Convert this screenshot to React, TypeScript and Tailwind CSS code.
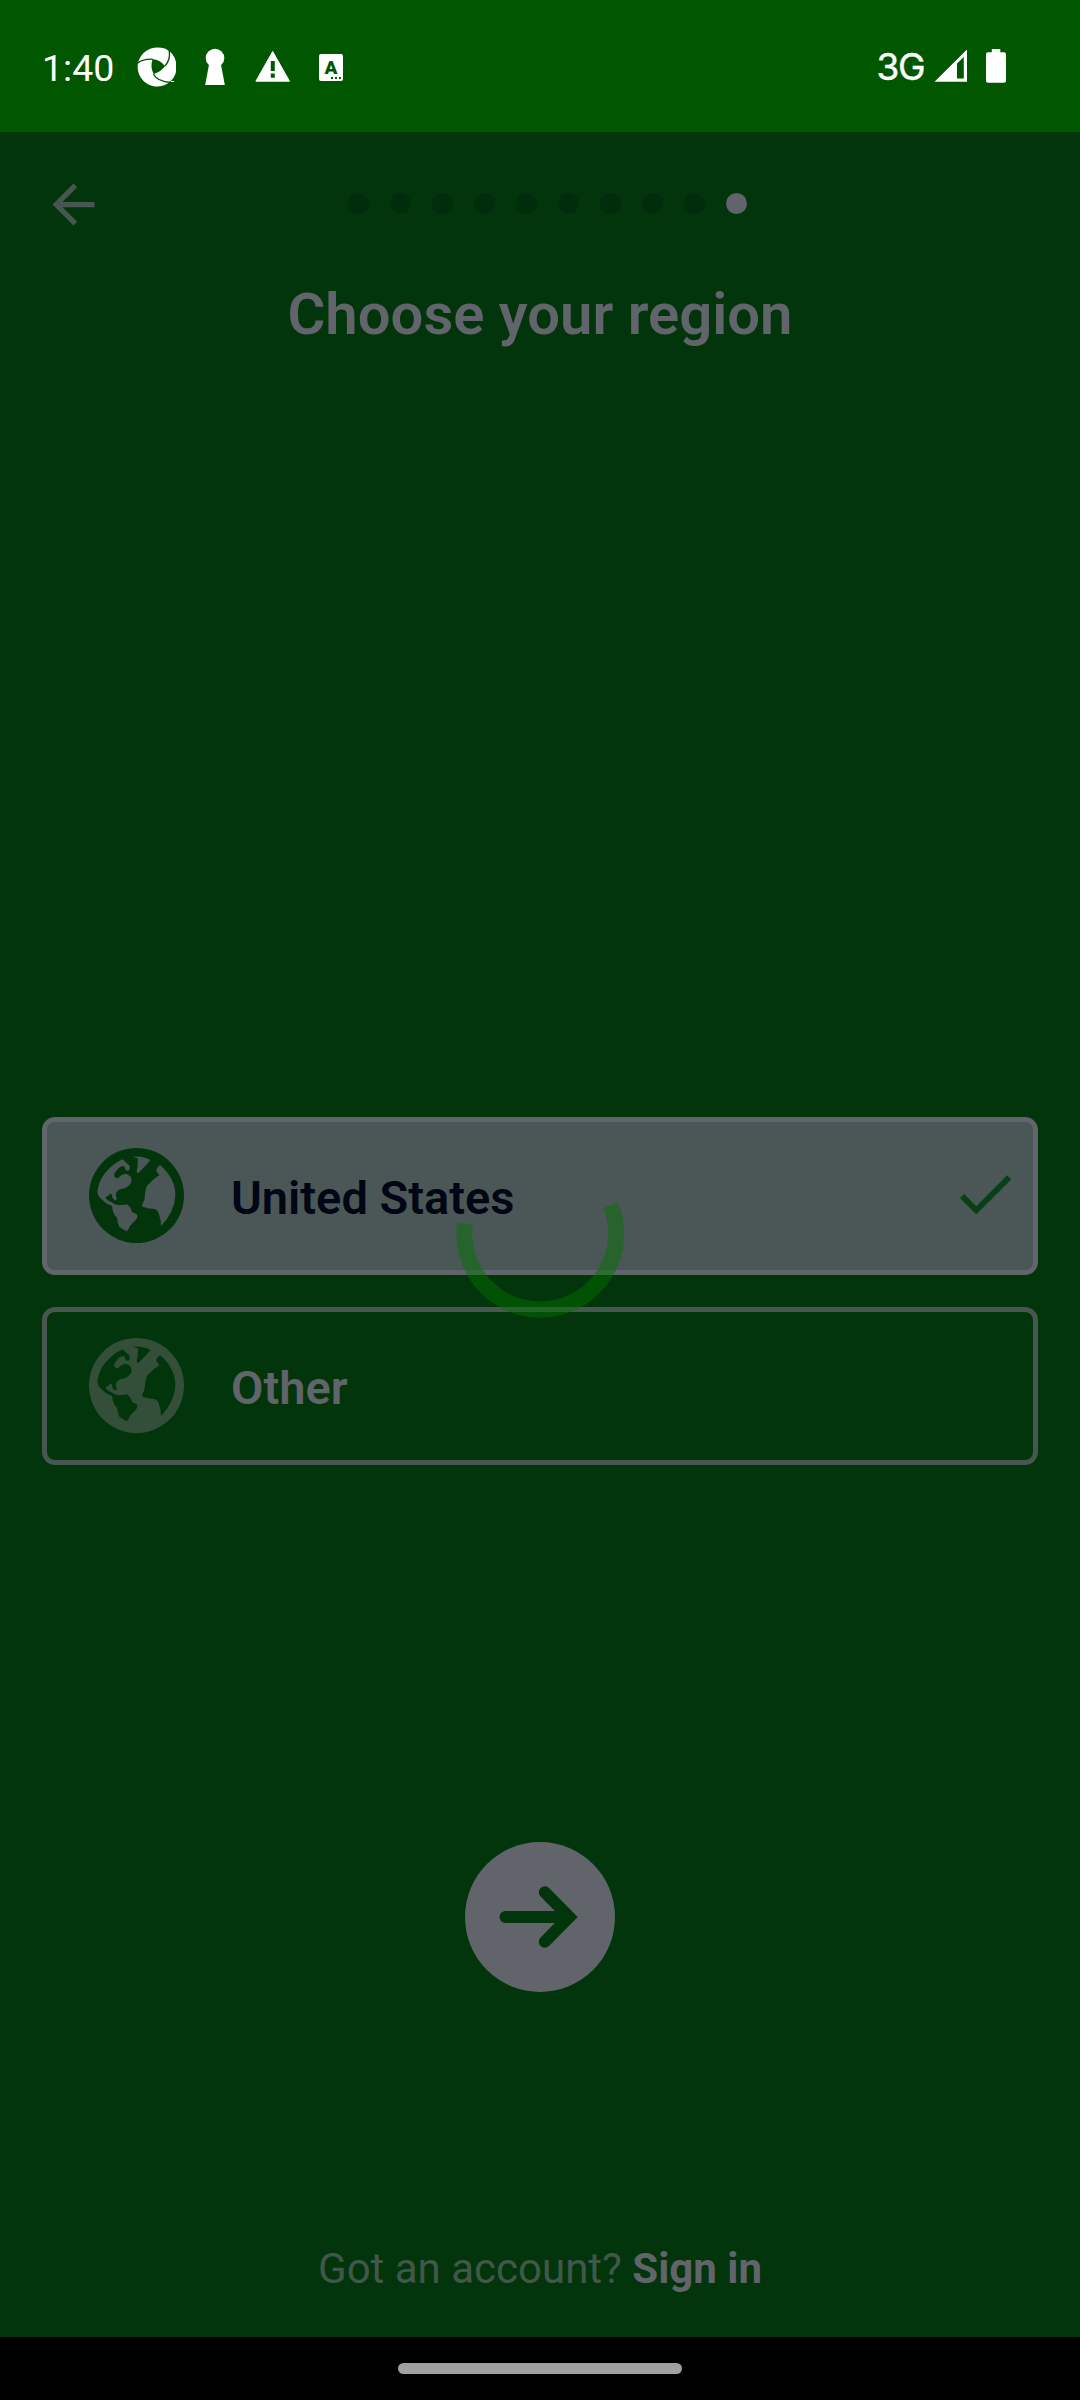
import React from "react";

function Globe({ id, className }: { id: string; className: string }) {
  return (
    <svg viewBox="0 0 285 285" className={`mb-px h-[95px] w-[95px] shrink-0 ${className}`}>
      <mask id={id}>
        <circle cx="142.5" cy="142.5" r="142.5" fill="white" />
        <g fill="black">
          <path d="M25 131Q27 145 35 151L51 166L69 174Q70 190 77 202Q84 206 85 214Q86 228 91 236Q102 244 111 249Q117 248 119 243Q121 234 133 223Q148 210 145 202Q143 197 130 193Q127 180 115 169Q104 172 88 171Q76 169 70 164L55 156Q49 152 50 148Q53 144 59 143Q62 135 67 138Q71 140 69 146L76 156Q84 158 84 151Q78 146 81 137Q82 129 95 123Q113 121 124 108Q132 97 123 84Q115 76 103 79Q95 82 89 89Q81 93 77 86Q73 77 82 69Q90 55 102 55Q110 56 108 63L113 68Q121 70 122 63L122 53L110 43L101 34Q77 43 50 73Q29 98 25 131Z" />
          <path d="M132 26Q160 23 185 36L168 55L148 75Q143 76 143 68Q147 55 146 45Q147 36 146 31Z" />
          <path d="M213 51Q259 91 259 141Q258 190 216 234Q216 215 210 199Q205 184 196 183Q176 182 163 177Q157 174 161 167Q169 154 168 138Q170 118 177 110L195 93L211 82L208 77Q203 74 202 66Q203 60 207 57Z" />
        </g>
      </mask>
      <rect width="285" height="285" fill="currentColor" mask={`url(#${id})`} />
    </svg>
  );
}

function StatusBar() {
  return (
    <header className="flex h-[132px] shrink-0 items-center bg-[#005700] pl-[42px] pr-[73px] pt-[2px] text-white">
      <span className="w-[95px] pt-[2px] text-[37.5px] leading-[44px]">1:40</span>
      <svg viewBox="0 0 40 40" className="h-10 w-10" fill="none">
        <path d="M14 1.5Q20-.5 28 1.5A19.5 19.5 0 0 1 39 15V25A19.5 19.5 0 1 1 14 1.5Z" fill="white" />
        <path d="M15.5 12.3Q22 12 28 19Q25 24 16.5 27Q13 20 15.5 12.3Z" fill="#005700" />
        <path
          d="M0 16.5Q7 11.5 16 12.3M32 3Q34 12 28 19M16.5 27Q20 34.5 34 35.5"
          stroke="#005700"
          strokeWidth="1.3"
        />
        <path d="M34 34.5h3" stroke="white" strokeWidth="1" />
      </svg>
      <svg viewBox="0 0 20 40" className="ml-7 h-10 w-5" fill="white">
        <circle cx="10" cy="11" r="9.3" />
        <path d="M4.5 15h11L19.8 38H.2Z" />
      </svg>
      <svg viewBox="0 0 36 40" className="ml-[30px] h-10 w-9">
        <path d="M17.7 4.5L34.5 34.2H.9Z" fill="white" stroke="white" strokeLinejoin="round" />
        <path d="M15.8 14h4v10h-4zM15.8 26.6h4v4.2h-4z" fill="#005700" />
      </svg>
      <span className="relative ml-7 flex h-[27px] w-6 justify-center rounded-[2px] bg-white text-[19px] font-black leading-[27px] text-[#005700]">
        A
        <span className="absolute bottom-[2px] right-[2px] flex gap-[2px]">
          <i className="h-[2px] w-[2px] bg-[#005700]" />
          <i className="h-[2px] w-[2px] bg-[#005700]" />
          <i className="h-[2px] w-[2px] bg-[#005700]" />
        </span>
      </span>
      <span className="ml-auto font-['Inter'] text-[37px] leading-[44px] tracking-[-1.5px] [-webkit-text-stroke:0.4px_white]">3G</span>
      <svg viewBox="0 0 34 40" className="ml-[10px] h-10 w-[34px]">
        <path
          d="M.5 34.8L33 2.5V34.8ZM23 16.5V31.4H29.8V10Z"
          fill="white"
          fillRule="evenodd"
        />
      </svg>
      <svg viewBox="0 0 22 40" className="ml-[17px] h-10 w-[22px]" fill="white">
        <rect x="1" y="5.3" width="20" height="30.4" rx="2" />
        <rect x="6.8" y="2" width="8.5" height="6" />
      </svg>
    </header>
  );
}

function TopBar() {
  return (
    <div className="flex h-[144px] shrink-0 items-center pl-[42px]">
      <svg viewBox="0 0 24 24" className="h-[63px] w-[63px] text-[#47574f]" fill="currentColor">
        <path d="M20 11H7.83l5.59-5.59L12 4l-8 8 8 8 1.41-1.41L7.83 13H20v-2z" />
      </svg>
      <div className="mb-[2px] ml-[243px] flex gap-[21px]">
        {Array.from({ length: 10 }, (_, i) => (
          <span
            key={i}
            className={`h-[21px] w-[21px] rounded-full ${i === 9 ? "bg-[#61646a]" : "bg-[#022d0d]"}`}
          />
        ))}
      </div>
    </div>
  );
}

function Spinner() {
  return (
    <svg
      viewBox="0 0 168 168"
      className="absolute left-1/2 top-[33.5px] h-[168px] w-[168px] -translate-x-1/2"
      fill="rgb(0 115 0 / 0.48)"
    >
      <path d="M.9 72.2A84 84 0 1 0 162.3 51.7L147.3 57A68 68 0 1 1 16.9 72.9Z" />
    </svg>
  );
}

export default function App() {
  return (
    <div className="flex h-[2400px] w-[1080px] flex-col bg-[#02350b] font-['Roboto',sans-serif]">
      <StatusBar />
      <TopBar />
      <h1 className="mt-1 text-center text-[58px] font-semibold leading-[68px] text-[#61646a]">
        Choose your region
      </h1>

      <div className="relative mt-[769px] flex flex-col gap-8 px-[42px]">
        <div className="flex h-[158px] items-center rounded-[13px] border-[5px] border-[#61646a] bg-[#4b5756] pl-[42px] pr-[13px]">
          <Globe id="land-us" className="text-[#02350b]" />
          <span className="ml-[47px] pt-1 text-[47px] font-semibold leading-[56px] text-[#010614]">
            United States
          </span>
          <svg viewBox="0 0 24 24" className="mb-[5px] ml-auto h-[70px] w-[70px] text-[#0b3f17]" fill="currentColor">
            <path d="M9 16.17L4.83 12l-1.42 1.41L9 19 21 7l-1.41-1.41z" />
          </svg>
        </div>
        <div className="flex h-[158px] items-center rounded-[13px] border-[5px] border-[#47574f] pl-[42px]">
          <Globe id="land-other" className="text-[#334e39]" />
          <span className="ml-[47px] pt-1 text-[47px] font-semibold leading-[56px] text-[#61646a]">Other</span>
        </div>
        <Spinner />
      </div>

      <button className="mx-auto mt-[377px] flex h-[150px] w-[150px] shrink-0 items-center justify-center rounded-full bg-[#61646a]">
        <svg viewBox="0 0 150 150" className="h-[150px] w-[150px]" fill="none" stroke="#02350b" strokeWidth="12">
          <path d="M40.5 75H94" strokeLinecap="round" />
          <path d="M79.8 50.3L104.3 75L79.8 99.7" strokeLinecap="round" strokeLinejoin="miter" />
        </svg>
      </button>

      <p className="mt-[252px] text-center text-[42px] leading-[49px] text-[#41574a]">
        Got an account? <b className="font-bold text-[#61646a]">Sign in</b>
      </p>

      <footer className="mt-auto flex h-[63px] shrink-0 items-center justify-center bg-black">
        <span className="h-[11px] w-[284px] rounded-full bg-[#a0a0a0]" />
      </footer>
    </div>
  );
}
